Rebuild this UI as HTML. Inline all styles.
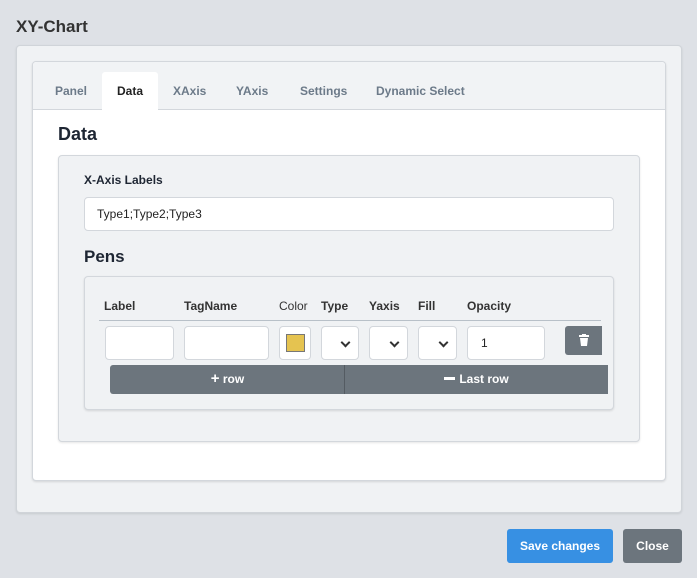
<!DOCTYPE html>
<html><head><style>
*{box-sizing:border-box;margin:0;padding:0}
body{width:697px;height:578px;background:#dee1e6;font-family:"Liberation Sans",sans-serif;position:relative;overflow:hidden;color:#222}
.a{position:absolute}
.inp{position:absolute;background:#fff;border:1px solid #d3d7dc;border-radius:4px;height:34px;top:326px}
.sel::after{content:"";position:absolute;right:9px;top:12px;width:5px;height:5px;border-right:2px solid #333;border-bottom:2px solid #333;transform:rotate(45deg)}
.th{position:absolute;top:299px;font-size:12px;font-weight:bold;color:#333}
.tab{position:absolute;top:84px;font-size:12px;font-weight:bold;color:#6c7a89}
</style></head><body>
<div class="a" style="left:16px;top:17px;font-size:17px;font-weight:bold;color:#333">XY-Chart</div>
<div class="a" style="left:16px;top:45px;width:666px;height:468px;background:#f0f2f4;border:1px solid #d0d4d9;border-radius:4px;box-shadow:0 1px 2px rgba(0,0,0,.1)"></div>
<div class="a" style="left:32px;top:61px;width:634px;height:420px;background:#fff;border:1px solid #d3d7dc;border-radius:4px;box-shadow:0 1px 2px rgba(0,0,0,.12)"></div>
<div class="a" style="left:33px;top:62px;width:632px;height:48px;background:#f1f3f5;border-bottom:1px solid #d3d7dc;border-radius:4px 4px 0 0"></div>
<div class="a" style="left:102px;top:72px;width:56px;height:39px;background:#fff;border-radius:3px 3px 0 0"></div>
<div class="tab" style="left:55px">Panel</div>
<div class="tab" style="left:117px;color:#222">Data</div>
<div class="tab" style="left:173px">XAxis</div>
<div class="tab" style="left:236px">YAxis</div>
<div class="tab" style="left:300px">Settings</div>
<div class="tab" style="left:376px">Dynamic Select</div>
<div class="a" style="left:58px;top:124px;font-size:18px;font-weight:bold;color:#1e2633">Data</div>
<div class="a" style="left:58px;top:155px;width:582px;height:287px;background:#f0f2f4;border:1px solid #d3d7dc;border-radius:4px;box-shadow:0 1px 2px rgba(0,0,0,.1)"></div>
<div class="a" style="left:84px;top:173px;font-size:12px;font-weight:bold;color:#1e2633">X-Axis Labels</div>
<div class="a" style="left:84px;top:197px;width:530px;height:34px;background:#fff;border:1px solid #d3d7dc;border-radius:4px;font-size:12px;padding:9px 12px;color:#222">Type1;Type2;Type3</div>
<div class="a" style="left:84px;top:247px;font-size:17px;font-weight:bold;color:#1e2633">Pens</div>
<div class="a" style="left:84px;top:276px;width:530px;height:134px;background:#f0f2f4;border:1px solid #d3d7dc;border-radius:4px;box-shadow:0 1px 2px rgba(0,0,0,.12)"></div>
<div class="th" style="left:104px">Label</div>
<div class="th" style="left:184px">TagName</div>
<div class="th" style="left:279px;font-weight:normal">Color</div>
<div class="th" style="left:321px">Type</div>
<div class="th" style="left:369px">Yaxis</div>
<div class="th" style="left:418px">Fill</div>
<div class="th" style="left:467px">Opacity</div>
<div class="a" style="left:99px;top:320px;width:502px;height:1px;background:#b8c0c8"></div>
<div class="inp" style="left:105px;width:69px"></div>
<div class="inp" style="left:184px;width:85px"></div>
<div class="inp" style="left:279px;width:32px"><div class="a" style="left:6px;top:7px;width:19px;height:18px;background:#e5c350;border:1px solid #777"></div></div>
<div class="inp sel" style="left:321px;width:38px"></div>
<div class="inp sel" style="left:369px;width:39px"></div>
<div class="inp sel" style="left:418px;width:39px"></div>
<div class="inp" style="left:467px;width:78px;font-size:12px;padding:9px 13px">1</div>
<div class="a" style="left:565px;top:326px;width:37px;height:29px;background:#6c757d;border-radius:3px 0 0 3px">
<svg width="37" height="29" viewBox="0 0 37 29"><rect x="14" y="9" width="10" height="2" fill="#fff"/><rect x="17" y="8" width="4" height="2" fill="#fff"/><path d="M15 12h8l-1 8h-6z" fill="#fff"/></svg></div>
<div class="a" style="left:110px;top:365px;width:498px;height:29px;background:#6c757d;border-radius:3px 0 0 3px"></div>
<div class="a" style="left:344px;top:365px;width:1px;height:29px;background:#545b62"></div>
<div class="a" style="left:110px;top:372px;width:235px;text-align:center;color:#fff;font-size:12px;font-weight:bold"><span style="font-size:15px;line-height:12px">+</span> row</div>
<div class="a" style="left:345px;top:372px;width:263px;text-align:center;color:#fff;font-size:12px;font-weight:bold"><span style="display:inline-block;width:11px;height:3px;background:#fff;vertical-align:3px;margin-right:4px"></span>Last row</div>
<div class="a" style="left:507px;top:529px;width:106px;height:34px;background:#3790e3;border-radius:3px;color:#fff;font-size:12px;font-weight:bold;text-align:center;line-height:34px">Save changes</div>
<div class="a" style="left:623px;top:529px;width:59px;height:34px;background:#6c757d;border-radius:3px;color:#fff;font-size:12px;font-weight:bold;text-align:center;line-height:34px">Close</div>
</body></html>
